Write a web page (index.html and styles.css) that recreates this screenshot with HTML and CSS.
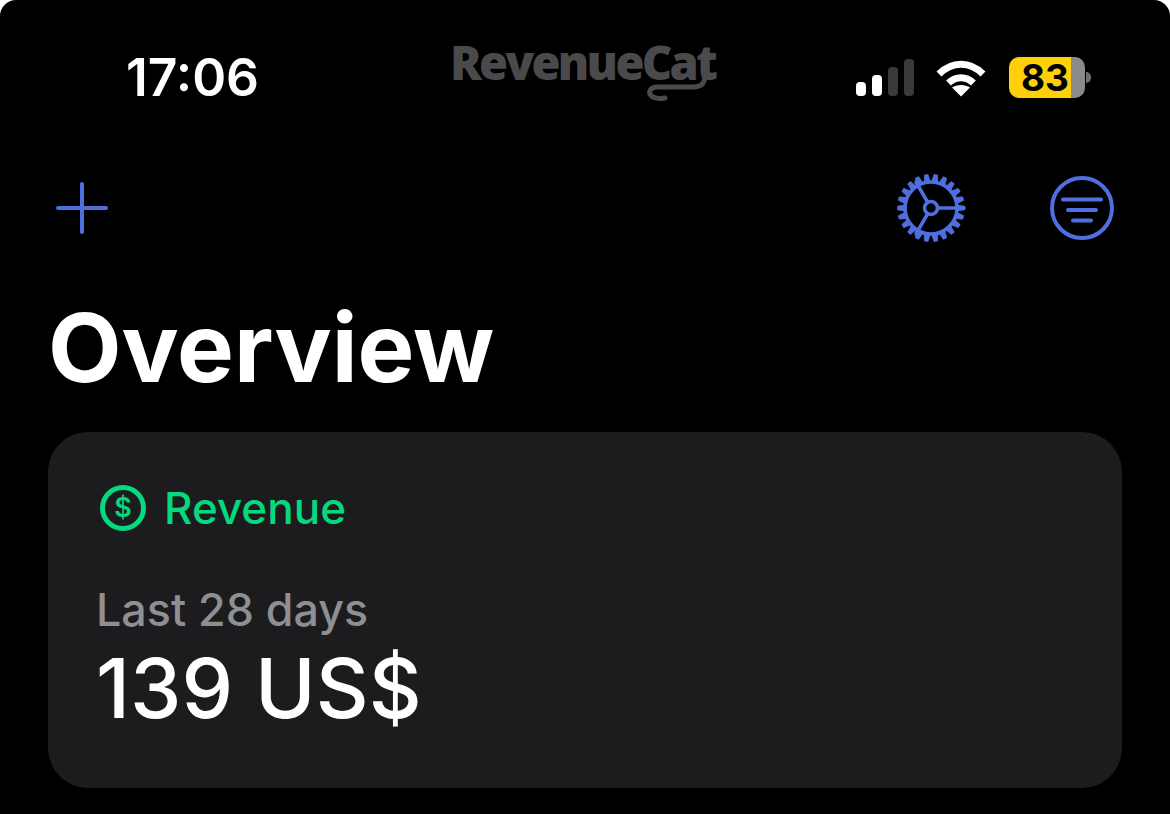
FILE: index.html
```html
<!DOCTYPE html>
<html lang="en">
<head>
<meta charset="utf-8">
<title>Overview</title>
<link rel="stylesheet" href="styles.css">
</head>
<body>
<main class="screen">
  <header class="status">
    <span class="time">17:06</span>
    <span class="logo">RevenueCat
      <svg class="logo-tail" viewBox="0 0 80 65" width="80" height="65" aria-hidden="true">
        <path d="M67 35 C67 44 63 47 55 47 L20 47 C11 47 9 54 15 57 C18 58.500 22 59 27 58" fill="none" stroke="#4a4a4c" stroke-width="5" stroke-linecap="round"/>
      </svg>
    </span>
    <div class="status-icons">
      <div class="signal">
        <i class="bar bar-1"></i><i class="bar bar-2"></i><i class="bar bar-3"></i><i class="bar bar-4"></i>
      </div>
      <svg class="wifi" viewBox="0 0 50 38" width="50" height="38" aria-hidden="true">
        <path d="M3 15 C16 2 34 2 47 15" fill="none" stroke="#fff" stroke-width="7" stroke-linecap="butt"/>
        <path d="M12.500 24 C20 17 30 17 37.500 24" fill="none" stroke="#fff" stroke-width="7"/>
        <path d="M25 37.500 L16 28.500 C21 25 29 25 34 28.500 Z" fill="#fff"/>
      </svg>
      <div class="battery">
        <div class="battery-body"><span class="battery-level">83</span></div>
        <i class="battery-nub"></i>
      </div>
    </div>
  </header>

  <nav class="toolbar">
    <svg class="icon-plus" viewBox="0 0 52 52" width="52" height="52" aria-hidden="true">
      <path d="M26 2V50M2 26H50" stroke="#4f6fe0" stroke-width="4" stroke-linecap="round" fill="none"/>
    </svg>
    <div class="toolbar-right">
      <svg class="icon-gear" viewBox="-36 -36 72 72" width="72" height="72" aria-hidden="true">
        <defs>
          <polygon id="tooth" points="-3,-26 3,-26 1.800,-33.500 -1.800,-33.500"/>
        </defs>
        <g fill="#4f6fe0" stroke="#4f6fe0" stroke-width="0.800" stroke-linejoin="round">
          <use href="#tooth" transform="rotate(8.180)"/>
          <use href="#tooth" transform="rotate(24.550)"/>
          <use href="#tooth" transform="rotate(40.910)"/>
          <use href="#tooth" transform="rotate(57.270)"/>
          <use href="#tooth" transform="rotate(73.640)"/>
          <use href="#tooth" transform="rotate(90)"/>
          <use href="#tooth" transform="rotate(106.360)"/>
          <use href="#tooth" transform="rotate(122.730)"/>
          <use href="#tooth" transform="rotate(139.090)"/>
          <use href="#tooth" transform="rotate(155.450)"/>
          <use href="#tooth" transform="rotate(171.820)"/>
          <use href="#tooth" transform="rotate(188.180)"/>
          <use href="#tooth" transform="rotate(204.550)"/>
          <use href="#tooth" transform="rotate(220.910)"/>
          <use href="#tooth" transform="rotate(237.270)"/>
          <use href="#tooth" transform="rotate(253.640)"/>
          <use href="#tooth" transform="rotate(270)"/>
          <use href="#tooth" transform="rotate(286.360)"/>
          <use href="#tooth" transform="rotate(302.730)"/>
          <use href="#tooth" transform="rotate(319.090)"/>
          <use href="#tooth" transform="rotate(335.450)"/>
          <use href="#tooth" transform="rotate(351.820)"/>
        </g>
        <g fill="none" stroke="#4f6fe0" stroke-width="3.600">
          <circle r="26"/>
          <circle r="6.500"/>
          <path d="M6.500 0H33M-3.250 -5.630L-15 -26M-3.250 5.630L-15 26" stroke-linecap="round"/>
        </g>
      </svg>
      <svg class="icon-filter" viewBox="0 0 66 66" width="66" height="66" aria-hidden="true">
        <circle cx="33" cy="33" r="30" fill="none" stroke="#4f6fe0" stroke-width="4"/>
        <path d="M14 24.500H52M19 35H47M24 45.500H42" stroke="#4f6fe0" stroke-width="4" stroke-linecap="round" fill="none"/>
      </svg>
    </div>
  </nav>

  <h1 class="title">Overview</h1>

  <section class="card">
    <div class="card-head">
      <svg class="icon-dollar" viewBox="0 0 48 48" width="48" height="48" aria-hidden="true">
        <circle cx="24" cy="24" r="20.500" fill="none" stroke="#05d87f" stroke-width="5"/>
        <text class="dollar-glyph" x="24" y="33" text-anchor="middle">$</text>
      </svg>
      <span class="card-title">Revenue</span>
    </div>
    <p class="card-label">Last 28 days</p>
    <p class="card-value">139 US$</p>
  </section>
</main>
</body>
</html>
```
FILE: styles.css
```css
* { box-sizing: border-box; }
html, body { margin: 0; height: 100%; }
body {
  background: #fff;
  overflow: hidden;
  font-family: Inter, "Liberation Sans", sans-serif;
}
.screen {
  height: 814px;
  background: #000;
  border-radius: 16px 16px 0 0;
  padding: 0 48px;
  overflow: hidden;
}
.status {
  display: flex;
  align-items: flex-start;
  height: 150px;
  padding-top: 46px;
}
.time {
  margin-left: 78px;
  width: 324px;
  color: #fff;
  font-size: 51.500px;
  font-weight: 600;
  line-height: 62px;
}
.logo {
  position: relative;
  width: 266px;
  margin-top: -9px;
  color: #4a4a4c;
  font-family: "Open Sans", sans-serif;
  font-size: 47px;
  font-weight: 800;
  line-height: 50px;
  letter-spacing: -2.700px;
  white-space: nowrap;
}
.logo-tail {
  position: absolute;
  left: 188px;
  top: 3px;
}
.status-icons {
  display: flex;
  align-items: flex-start;
  margin-left: 140px;
}
.signal {
  display: flex;
  align-items: flex-end;
  gap: 6px;
  height: 37px;
  margin-top: 13px;
}
.bar {
  width: 10px;
  border-radius: 4px;
  background: #3a3a3a;
}
.bar-1 { height: 14px; background: #fff; }
.bar-2 { height: 21px; background: #fff; }
.bar-3 { height: 29px; }
.bar-4 { height: 37px; }
.wifi { margin: 13px 0 0 22px; }
.battery {
  display: flex;
  align-items: center;
  margin: 11px 0 0 23px;
}
.battery-body {
  width: 76px;
  height: 41px;
  border-radius: 10px;
  background: linear-gradient(90deg, #ffcf0c 0 62px, #8a8a8a 62px);
}
.battery-level {
  display: block;
  padding-left: 12px;
  color: #000;
  font-size: 37px;
  font-weight: 700;
  line-height: 41px;
}
.battery-nub {
  width: 5px;
  height: 11px;
  margin-left: 1px;
  border-radius: 0 6px 6px 0;
  background: #6e6e6e;
}
.toolbar {
  display: flex;
  justify-content: space-between;
  align-items: center;
  height: 116px;
  padding: 0 7px 0 8px;
}
.toolbar-right {
  display: flex;
  align-items: center;
  gap: 82px;
}
.title {
  margin: 21px 0 0;
  color: #fff;
  font-size: 95.500px;
  font-weight: 700;
  line-height: 120px;
}
.card {
  margin-top: 25px;
  height: 356px;
  padding: 52px 48px 0 48px;
  border-radius: 40px;
  background: #1c1c1e;
}
.card-head {
  display: flex;
  align-items: center;
  gap: 17px;
  height: 48px;
  margin-left: 3px;
}
.dollar-glyph {
  fill: #05d87f;
  font-family: Inter, sans-serif;
  font-size: 27px;
  font-weight: 600;
}
.card-title {
  color: #05d87f;
  font-size: 44px;
  font-weight: 500;
}
.card-label {
  margin: 52px 0 0;
  color: #8e8e93;
  font-size: 44.800px;
  font-weight: 500;
  line-height: 52px;
}
.card-value {
  margin: 3px 0 0;
  color: #fff;
  font-size: 82px;
  font-weight: 500;
  line-height: 100px;
}
```
